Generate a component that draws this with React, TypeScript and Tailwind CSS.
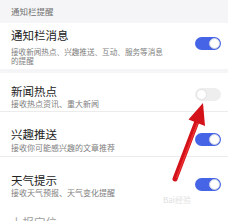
import React from "react";

function Toggle({ on, className }: { on: boolean; className?: string }) {
  return on ? (
    <div className={`w-[26px] h-[13px] rounded-full bg-[#4565e6] flex items-center justify-end pr-[1px] shrink-0 ${className ?? ""}`}>
      <div className="w-[11px] h-[11px] rounded-full bg-white border border-[#c9cde0]" />
    </div>
  ) : (
    <div className={`w-[26px] h-[13px] rounded-full bg-[#eeeeee] flex items-center justify-start pl-[1px] shrink-0 ${className ?? ""}`}>
      <div className="w-[11px] h-[11px] rounded-full bg-white border border-[#e2e2e2]" />
    </div>
  );
}

export default function App() {
  const font = { fontFamily: '"Noto Sans CJK SC", "Noto Sans", sans-serif' };
  return (
    <div className="relative w-[228px] h-[221px] overflow-hidden bg-white" style={font}>
      <div className="h-[23px] bg-[#f5f5f7] pl-[11px] flex items-center text-[8.5px] text-[#707070]">
        通知栏提醒
      </div>

      <div className="h-[46px] flex items-start justify-between pl-[11px] pr-[7px]">
        <div className="pt-[5px]">
          <div className="text-[11.5px] leading-[14px] text-[#222]">通知栏消息</div>
          <div className="mt-[4.5px] text-[7.6px] leading-[9.4px] text-[#808080]">
            <div>接收新闻热点、兴趣推送、互动、服务等消息</div>
            <div>的提醒</div>
          </div>
        </div>
        <Toggle on className="mt-[14px]" />
      </div>

      <div className="h-[4px] bg-[#f5f5f7]" />

      <div className="h-[39px] flex items-start justify-between pl-[11px] pr-[7px] border-b border-[#ececec]">
        <div className="pt-[11px]">
          <div className="text-[11.5px] leading-[14px] text-[#222]">新闻热点</div>
          <div className="mt-[1px] text-[8px] leading-[9px] text-[#808080]">接收热点资讯、重大新闻</div>
        </div>
        <Toggle on={false} className="mt-[15px]" />
      </div>

      <div className="h-[45px] flex items-start justify-between pl-[11px] pr-[7px] border-b border-[#ececec]">
        <div className="pt-[15px]">
          <div className="text-[11.5px] leading-[14px] text-[#222]">兴趣推送</div>
          <div className="mt-[2px] text-[8px] leading-[9px] text-[#808080]">接收你可能感兴趣的文章推荐</div>
        </div>
        <Toggle on className="mt-[21px]" />
      </div>

      <div className="h-[58px] flex items-start justify-between pl-[11px] pr-[7px]">
        <div className="pt-[16px]">
          <div className="text-[11.5px] leading-[14px] text-[#222]">天气提示</div>
          <div className="mt-[1px] text-[8px] leading-[9px] text-[#808080]">接收天气预报、天气变化提醒</div>
        </div>
        <Toggle on className="mt-[21px]" />
      </div>

      <div className="pl-[11px] text-[11.5px] leading-[14px] text-[#a0a0a0]">上报定位</div>

      <div className="absolute left-[163px] top-[195px] text-[8px] leading-[10px] text-[#dedede]">
        Bai<span className="text-[#e2e2e2]">经验</span>
      </div>

      <svg className="absolute left-0 top-0" width="228" height="221" viewBox="0 0 228 221">
        <line x1="175" y1="179" x2="197.5" y2="120" stroke="#d4121a" strokeWidth="5" strokeLinecap="round" />
        <line x1="176.8" y1="177.5" x2="198.3" y2="121" stroke="#ee3535" strokeWidth="1.3" strokeLinecap="round" />
        <polygon points="203,103 205,126 188.5,119.5" fill="#d4121a" />
      </svg>
    </div>
  );
}
